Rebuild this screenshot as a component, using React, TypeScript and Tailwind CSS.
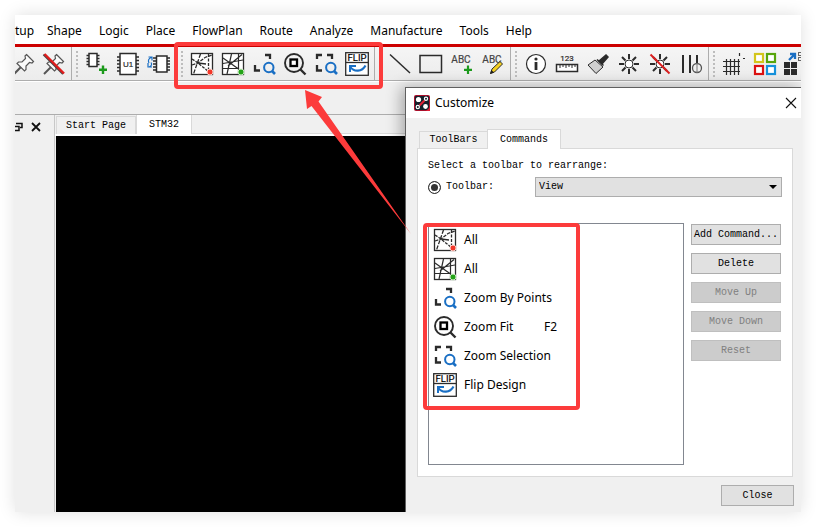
import React from 'react';

const INK = '#2b2b2b';
const BLUE = '#1a6fc4';

function Icon({ children }: { children: React.ReactNode }) {
  return (
    <svg viewBox="0 0 24 24" width="24" height="24" fill="none" stroke={INK} strokeWidth="1.5" className="block shrink-0" aria-hidden="true">
      {children}
    </svg>
  );
}

const pinShape = (
  <g stroke="#555" strokeWidth="1.2" fill="#fafafa">
    <path d="M9 15 L2 22" strokeWidth="2" />
    <path d="M14.5 2.5 L21.5 9.5 L20 11 L17.5 10.5 L14 14 L14 17.500 L12.500 19 L5 11.500 L6.500 10 L10 10 L13.500 6.500 L13 4 Z" />
  </g>
);

const Pin = () => <Icon>{pinShape}</Icon>;
const Unpin = () => (
  <Icon>
    {pinShape}
    <path d="M1.500 2.500 L21 22" stroke="#444" strokeWidth="2" />
    <path d="M2.500 2 L22 21.500" stroke="#e01c1c" strokeWidth="2.400" />
  </Icon>
);
const ChipAdd = () => (
  <Icon>
    <path d="M1.500 3.500H14.500M1.500 6.500H14.500M1.500 9.500H14.500M1.500 12.500H14.500" strokeWidth="1.400" />
    <rect x="4" y="1.500" width="8" height="13" fill="#fff" />
    <path d="M18 13.500V22M14 17.800H22" stroke="#1c9a1c" strokeWidth="2.400" />
  </Icon>
);
const ChipU1 = () => (
  <Icon>
    <path d="M1 5H23M1 8.500H23M1 12H23M1 15.500H23M1 19H23" strokeWidth="1.600" />
    <rect x="4" y="1.500" width="16" height="21" fill="#fff" />
    <text x="12" y="15" fontSize="8" textAnchor="middle" fontFamily="Liberation Sans, sans-serif" fill={INK} stroke={INK} strokeWidth="0.200">U1</text>
  </Icon>
);
const ChipSwap = () => (
  <Icon>
    <path d="M6 6H23M6 9H23M6 12H23M6 15H23M6 18H23" strokeWidth="1.400" />
    <rect x="9.500" y="4" width="10.500" height="16" fill="#fff" />
    <path d="M4.500 5.500C1 6.500 1 9 2 11M1.500 5H5V8.500M1 11V15H5M2 15C5 14 5 12 4 10.500" stroke={BLUE} strokeWidth="1.200" />
  </Icon>
);
const NetsOff = () => (
  <Icon>
    <rect x="1.500" y="1.500" width="21" height="21" fill="#fff" strokeWidth="1.300" />
    <g strokeWidth="1.300">
      <path d="M10.500 2L3.500 22" strokeDasharray="4 1.500" />
      <path d="M2 7L8 11L19 20" strokeDasharray="3 1.200" />
      <path d="M18.500 2V17" strokeDasharray="3 1.500" />
      <path d="M2 13L8 11L15 5.500L22 3" strokeDasharray="3.500 1.200" />
      <path d="M8 11L16 12" />
    </g>
    <circle cx="20" cy="20" r="3" fill="#f2382a" stroke="#fbd0c8" strokeWidth="1" />
  </Icon>
);
const NetsOn = () => (
  <Icon>
    <rect x="1.500" y="1.500" width="21" height="21" fill="#fff" strokeWidth="1.300" />
    <path d="M10.500 2L6 22M17.500 2V22M2 6L19 18M2 11.500L22 8M2 16.500H18M7 14L21 2.500" strokeWidth="1.200" />
    <circle cx="20" cy="20" r="3" fill="#24a318" stroke="#c9ecc2" strokeWidth="1" />
  </Icon>
);
const blueLens = (
  <g stroke={BLUE}>
    <circle cx="16.800" cy="15.500" r="4.700" strokeWidth="2" />
    <path d="M20 19L23 22" strokeWidth="2.600" />
  </g>
);
const ZoomPoints = () => (
  <Icon>
    <path d="M13 3H18V7M3 13V18.500H8" strokeWidth="2.300" />
    {blueLens}
  </Icon>
);
const ZoomFit = () => (
  <Icon>
    <circle cx="11" cy="11" r="9" strokeWidth="1.900" />
    <path d="M17.500 17.500L22.500 22.500" strokeWidth="2.400" />
    <rect x="7.500" y="7.500" width="6.500" height="6.500" stroke="#000" strokeWidth="2.300" fill="#fff" />
  </Icon>
);
const ZoomSelect = () => (
  <Icon>
    <path d="M8 3H3V7M13 3H18V7M3 13V18.500H8" strokeWidth="2.300" />
    {blueLens}
  </Icon>
);
const Flip = () => (
  <Icon>
    <rect x="0.700" y="0.700" width="22.600" height="22.600" fill="#fff" strokeWidth="1.300" />
    <path d="M1 10.500H23" strokeWidth="1.300" />
    <text x="12" y="9.300" fontSize="9.500" textAnchor="middle" fontFamily="Roboto, sans-serif" fill="#000" stroke="#000" strokeWidth="0.200">FLIP</text>
    <path d="M5 14.500C9 20.500 17 20 20.500 13.500" stroke={BLUE} strokeWidth="2.200" />
    <path d="M5 20V14H11" stroke={BLUE} strokeWidth="2" />
  </Icon>
);
const Line = () => <Icon><path d="M2 2.500L22 21" /></Icon>;
const Rectangle = () => <Icon><rect x="1" y="3.500" width="21.500" height="17" strokeWidth="1.500" /></Icon>;
const abcLabel = (
  <text x="11" y="11" fontSize="10" textAnchor="middle" fontFamily="Roboto, sans-serif" fill="#444" stroke="#444" strokeWidth="0.200">ABC</text>
);
const TextAdd = () => (
  <Icon>
    {abcLabel}
    <path d="M18 13.500V22M14 17.800H22" stroke="#1c9a1c" strokeWidth="2.200" />
  </Icon>
);
const TextEdit = () => (
  <Icon>
    {abcLabel}
    <path d="M9.500 21.500L11 17L19 9.500L21.500 12L13.500 20Z" fill="#f5d020" strokeWidth="1" />
    <path d="M9 22L10.500 18L13 20.500Z" fill="#222" stroke="none" />
  </Icon>
);
const Info = () => (
  <Icon>
    <circle cx="12" cy="12" r="9.500" fill="#fff" strokeWidth="1.200" />
    <path d="M12 10V18" strokeWidth="2.800" />
    <circle cx="12" cy="7" r="1.600" fill={INK} stroke="none" />
  </Icon>
);
const Ruler = () => (
  <Icon>
    <text x="12" y="9" fontSize="8" textAnchor="middle" fontFamily="Roboto, sans-serif" fill={INK} stroke={INK} strokeWidth="0.200">123</text>
    <rect x="1.500" y="12.500" width="21" height="7" fill="#fff" />
    <path d="M5 13V16M8 13V15M11 13V16M14 13V15M17 13V16M20 13V15" strokeWidth="1" />
  </Icon>
);
const Brush = () => (
  <Icon>
    <path d="M13 9L20 3L22 5L16 12Z" fill={INK} />
    <path d="M9 8L17 15L10 21.500L2 13Z" fill="#cfcfcf" strokeWidth="1" />
    <path d="M11 7.500L17.500 13.500" strokeWidth="1.600" />
  </Icon>
);
const sunShape = (
  <g>
    <path d="M12 2V7M12 17V22M2 12H7M17 12H22M5 5L8.500 8.500M15.500 15.500L19 19M19 5L15.500 8.500M5 19L8.500 15.500" strokeWidth="2" />
    <circle cx="12" cy="12" r="4" fill="#fff" strokeWidth="1" />
  </g>
);
const Sun = () => <Icon>{sunShape}</Icon>;
const SunOff = () => (
  <Icon>
    {sunShape}
    <path d="M2.500 2.500L21.500 21.500" stroke="#dc2020" strokeWidth="2" />
  </Icon>
);
const Bars = () => (
  <Icon>
    <path d="M4 3V21M11 3V21M18 3V12" strokeWidth="2" />
    <circle cx="18" cy="16" r="4.500" stroke="#555" strokeWidth="1.300" />
    <path d="M18 11V21" stroke="#777" strokeWidth="1" />
  </Icon>
);
const Grid = () => (
  <Icon>
    <path d="M4.500 7V23M8.500 7V23M12.500 7V23M16.500 7V23M1 9.500H18M1 14.500H18M1 19.500H18" strokeWidth="1.200" />
    <path d="M17.500 1V4M21 6.500H23" strokeWidth="1.200" />
  </Icon>
);
const Colors = () => (
  <Icon>
    <rect x="2" y="2" width="8" height="8" fill="#fff" stroke="#d3c51c" strokeWidth="2.200" />
    <rect x="14" y="2" width="8" height="8" fill="#fff" stroke="#57a50b" strokeWidth="2.200" />
    <rect x="2" y="14" width="8" height="8" fill="#fff" stroke="#dc1111" strokeWidth="2.200" />
    <rect x="14" y="14" width="8" height="8" fill="#fff" stroke="#1592dc" strokeWidth="2.200" />
  </Icon>
);
const Tiles = () => (
  <Icon>
    <path d="M0 10H6V16H0ZM7 10H13V16H7ZM0 17H6V23H0ZM7 17H13V23H7Z" fill={INK} stroke="none" />
    <path d="M5 8L11 2M6 2H11V7" stroke={BLUE} strokeWidth="2.300" />
    <rect x="14.500" y="0.500" width="5" height="3" stroke="#666" strokeWidth="1" />
    <rect x="14.500" y="5.500" width="5" height="3" stroke="#666" strokeWidth="1" />
  </Icon>
);
const AppLogo = () => (
  <svg viewBox="0 0 16 16" width="16" height="16" className="block" aria-hidden="true">
    <rect width="16" height="16" rx="2" fill="#a80f2b" />
    <rect x="1" y="1" width="14" height="14" rx="1" fill="#15202b" />
    <path d="M5.500 10.500L10.500 5.500" stroke="#e01f35" strokeWidth="2" />
    <path d="M12 16H16V12Z" fill="#e01f35" />
    <circle cx="4.500" cy="4.500" r="2.600" fill="#fff" />
    <circle cx="11.500" cy="11.500" r="2.400" fill="#fff" />
    <circle cx="12" cy="3.800" r="1.600" fill="#15202b" stroke="#fff" strokeWidth="1.200" />
    <circle cx="3.800" cy="12" r="1.600" fill="#15202b" stroke="#fff" strokeWidth="1.200" />
  </svg>
);

type Tool = [string, () => React.JSX.Element];

const groups: Tool[][] = [
  [['Add component', ChipAdd], ['Component U1', ChipU1], ['Swap component', ChipSwap]],
  [['Unrats all', NetsOff], ['Rats all', NetsOn], ['Zoom by points', ZoomPoints], ['Zoom fit', ZoomFit], ['Zoom selection', ZoomSelect], ['Flip design', Flip]],
  [['Add line', Line], ['Add rectangle', Rectangle], ['Add text', TextAdd], ['Edit text', TextEdit]],
  [['Show element', Info], ['Measure', Ruler], ['Assign color', Brush], ['Highlight', Sun], ['Remove highlight', SunOff], ['Waive', Bars]],
  [['Grid', Grid], ['Colors', Colors], ['Tiles', Tiles]],
];

const commands: [string, () => React.JSX.Element, string?][] = [
  ['All', NetsOff],
  ['All', NetsOn],
  ['Zoom By Points', ZoomPoints],
  ['Zoom Fit', ZoomFit, 'F2'],
  ['Zoom Selection', ZoomSelect],
  ['Flip Design', Flip],
];

const menus = ['Shape', 'Logic', 'Place', 'FlowPlan', 'Route', 'Analyze', 'Manufacture', 'Tools', 'Help'];

function ToolButton({ tool }: { tool: Tool }) {
  const Glyph = tool[1];
  return (
    <button type="button" aria-label={tool[0]} className="shrink-0">
      <Glyph />
    </button>
  );
}

function MenuBar() {
  return (
    <nav className="flex h-[29px] shrink-0 items-center gap-[17px] bg-white pt-0.5">
      <button type="button" className="w-[15px] text-left whitespace-nowrap">tup</button>
      {menus.map((m) => (
        <button key={m} type="button">{m}</button>
      ))}
    </nav>
  );
}

function Toolbar() {
  return (
    <div className="flex h-[34px] shrink-0 overflow-hidden border-b border-[#adadad] bg-gradient-to-b from-[#f5f5f5] to-[#ececec]">
      <div className="-ml-[3px] flex shrink-0 items-center gap-1.5 pr-[5px]">
        <ToolButton tool={['Fix', Pin]} />
        <ToolButton tool={['Unfix', Unpin]} />
      </div>
      {groups.map((g, i) => (
        <div key={i} className="flex shrink-0 items-center gap-[7px] border-l border-[#adadad] pr-[5px] pl-1">
          <span className="h-[26px] w-0.5 border-l-2 border-dotted border-[#bdbdbd]" />
          {g.map((t) => (
            <ToolButton key={t[0]} tool={t} />
          ))}
        </div>
      ))}
    </div>
  );
}

function Workspace() {
  return (
    <div className="flex flex-1 border-t border-[#adadad] font-['Liberation_Mono',monospace] text-[10px]">
      <aside className="flex w-10 shrink-0 items-start gap-2 border-r border-[#c8c8c8] pt-[7px]">
        <button type="button" aria-label="Restore pane" className="w-2 overflow-hidden">
          <svg viewBox="0 0 8 10" width="8" height="10" fill="none" stroke="#111" aria-hidden="true">
            <path d="M1 1.500H7V5.500H5" strokeWidth="1.500" />
            <path d="M-2 4.500H4V8.500H-2" strokeWidth="1.500" />
          </svg>
        </button>
        <button type="button" aria-label="Close pane">
          <svg viewBox="0 0 10 10" width="10" height="10" stroke="#111" strokeWidth="1.800" aria-hidden="true">
            <path d="M1 1L9 9M9 1L1 9" />
          </svg>
        </button>
      </aside>
      <div className="flex min-w-0 flex-1 flex-col">
        <div role="tablist" className="flex h-[21px] items-end border-b-2 border-white pl-px">
          <button type="button" role="tab" aria-selected="false" className="h-[18px] w-20 border border-b-0 border-[#d9d9d9] bg-[#f0f0f0]">Start Page</button>
          <button type="button" role="tab" aria-selected="true" className="h-full w-[56px] border-x border-[#d9d9d9] bg-white">STM32</button>
          <span className="flex-1 border-b border-[#d9d9d9]" />
        </div>
        <main className="ml-px flex-1 bg-black" />
      </div>
    </div>
  );
}

const pushButton = 'h-[21px] border border-[#adadad] bg-[#e1e1e1] text-center text-black';
const pushButtonOff = 'h-[21px] border border-[#bfbfbf] bg-[#cccccc] text-center text-[#808080]';

function CustomizeDialog() {
  return (
    <section role="dialog" aria-label="Customize" className="absolute top-[72px] right-0 bottom-0 left-[390px] flex flex-col border-t border-l border-[#606060] bg-[#f0f0f0] shadow-[-4px_0_14px_rgba(0,0,0,0.3)]">
      <header className="flex h-[30px] shrink-0 items-center gap-[5px] bg-white pr-1 pl-2">
        <AppLogo />
        <h1 className="flex-1">Customize</h1>
        <button type="button" aria-label="Close dialog">
          <svg viewBox="0 0 12 12" width="12" height="12" stroke="#111" strokeWidth="1.100" aria-hidden="true">
            <path d="M1 1L11 11M11 1L1 11" />
          </svg>
        </button>
      </header>
      <div className="flex flex-1 flex-col pt-[11px] pr-2 pb-1.5 pl-[11px] font-['Liberation_Mono',monospace] text-[10px]">
        <div role="tablist" className="z-10 -mb-px flex h-[20px] items-end pl-0.5">
          <button type="button" role="tab" aria-selected="false" className="h-[18px] w-[68px] border border-r-0 border-[#d9d9d9] bg-[#f0f0f0]">ToolBars</button>
          <button type="button" role="tab" aria-selected="true" className="h-full w-[74px] border border-b-0 border-[#d9d9d9] bg-white">Commands</button>
        </div>
        <div className="flex flex-1 flex-col border border-[#d9d9d9] bg-white pt-2 pr-2.5 pb-[11px] pl-2.5">
          <p className="h-5 pt-px leading-4">Select a toolbar to rearrange:</p>
          <div className="flex h-5 items-center">
            <label className="flex w-[107px] items-center gap-[5px]">
              <input type="radio" name="target" defaultChecked className="h-[13px] w-[13px] appearance-none rounded-full border border-[#333] bg-[#333] shadow-[inset_0_0_0_2px_white]" />
              Toolbar:
            </label>
            <div className="relative flex h-full flex-1">
              <select aria-label="Toolbar" className="h-full w-full appearance-none border border-[#adadad] bg-[#e1e1e1] pl-[3px]">
                <option>View</option>
              </select>
              <svg viewBox="0 0 8 4" width="8" height="4" className="pointer-events-none absolute top-2 right-[5px]" aria-hidden="true">
                <path d="M0 0H8L4 4Z" fill="#000" />
              </svg>
            </div>
          </div>
          <div className="mt-[26px] flex flex-1 gap-[7px]">
            <ul className="flex-1 border border-[#828790] pt-px pl-1 font-['Noto_Sans','Open_Sans',sans-serif] text-[12px]">
              {commands.map(([label, Glyph, key], i) => (
                <li key={i} className="flex h-[29px] items-center gap-[7px]">
                  <Glyph />
                  <span className={key ? 'w-[73px]' : ''}>{label}</span>
                  {key && <span>{key}</span>}
                </li>
              ))}
            </ul>
            <div className="flex w-[91px] flex-col gap-2 pt-px pr-px">
              <button type="button" className={pushButton}>Add Command...</button>
              <button type="button" className={pushButton}>Delete</button>
              <button type="button" disabled className={pushButtonOff}>Move Up</button>
              <button type="button" disabled className={pushButtonOff}>Move Down</button>
              <button type="button" disabled className={pushButtonOff}>Reset</button>
            </div>
          </div>
        </div>
        <button type="button" className="mt-2 -mr-px h-[21px] w-[73px] self-end border border-[#adadad] bg-[#e1e1e1]">Close</button>
      </div>
    </section>
  );
}

export default function App() {
  return (
    <div className="flex min-h-screen bg-white p-[15px] font-['Noto_Sans','Open_Sans',sans-serif] text-[12px] leading-4 text-black">
      <div className="relative flex min-w-0 flex-1 flex-col bg-[#f0f0f0] shadow-[0_0_16px_rgba(0,0,0,0.13)]">
        <MenuBar />
        <div className="h-[3px] shrink-0 bg-[#cc0000]" />
        <Toolbar />
        <div className="h-[33px] shrink-0 border-t border-white" />
        <Workspace />
        <div className="pointer-events-none absolute inset-x-0 top-[33px] bottom-0 overflow-hidden">
          <div className="pointer-events-auto absolute inset-x-0 -top-[33px] bottom-0">
            <CustomizeDialog />
          </div>
        </div>
        <div className="pointer-events-none absolute top-[27px] left-[159px] h-[47px] w-[209px] rounded border-4 border-[#fc3b3b]" />
        <div className="pointer-events-none absolute top-[208px] left-[408px] h-[187px] w-[157px] rounded border-4 border-[#fc3b3b]" />
        <svg viewBox="0 0 106 144" width="106" height="144" className="pointer-events-none absolute top-[75px] left-[290px]" aria-hidden="true">
          <path d="M0 0L17 7L13.500 11.500L106 144L6.500 16L2 19Z" fill="#fc3b3b" />
        </svg>
      </div>
    </div>
  );
}
